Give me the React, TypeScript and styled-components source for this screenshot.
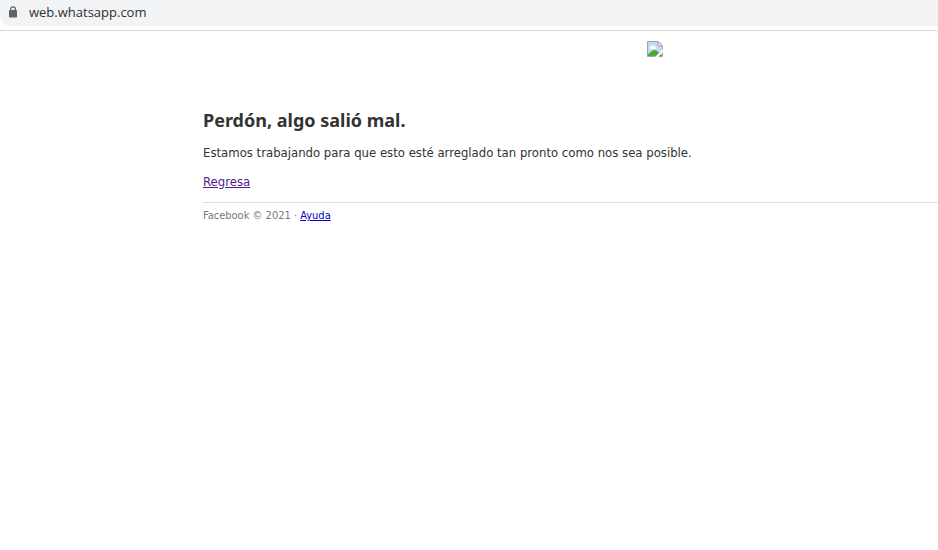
import React from "react";
import styled, { createGlobalStyle } from "styled-components";

const GlobalStyle = createGlobalStyle`
  *, *::before, *::after {
    box-sizing: border-box;
  }
  body {
    margin: 0;
    background: #fff;
    color: #333;
    font-family: Tahoma, "DejaVu Sans Condensed", sans-serif;
    font-size: 13px;
    line-height: 18px;
  }
`;

const AddressBar = styled.header`
  height: 31px;
  padding-bottom: 4px;
  border-bottom: 1px solid #dadada;
`;

const AddressField = styled.label`
  display: flex;
  align-items: center;
  gap: 11px;
  height: 26px;
  padding: 0 0 2px 8px;
  border-bottom-left-radius: 10px;
  background: #f1f3f4;
`;

const AddressInput = styled.input`
  flex: 1;
  min-width: 0;
  height: 20px;
  padding: 0;
  border: 0;
  outline: 0;
  background: transparent;
  color: #303134;
  font-family: "Open Sans", sans-serif;
  font-size: 13px;
  line-height: 20px;
`;

const Page = styled.main`
  margin-left: 203px;
`;

const Banner = styled.div`
  display: flex;
  justify-content: center;
  padding: 10px 0 0 169px;
  margin-bottom: 51px;
`;

const Title = styled.h1`
  margin: 0 0 12px;
  font-family: "Noto Sans", sans-serif;
  font-size: 18px;
  font-weight: 700;
  line-height: 24px;
`;

const Message = styled.p`
  margin: 0 0 11px;
`;

const BackLink = styled.a`
  color: #551a8b;
`;

const Footer = styled.footer`
  margin-top: 11px;
  padding-top: 4px;
  border-top: 1px solid #ddd;
  color: #777;
  font-size: 11px;
`;

const HelpLink = styled.a`
  color: #0000cc;
`;

function LockIcon() {
  return (
    <svg width="10" height="12" viewBox="0 0 10 12" aria-hidden="true">
      <path d="M2.6 5V3.2a2.4 2.4 0 0 1 4.8 0V5" fill="none" stroke="#5f6368" strokeWidth="1.2" />
      <rect x="1" y="4" width="8" height="7.5" rx="0.8" fill="#5f6368" />
    </svg>
  );
}

function BrokenImage() {
  return (
    <svg width="16" height="16" viewBox="0 0 16 16" role="img" aria-label="Logo">
      <path d="M.5 .5H11L15.5 5V15.5H.5Z" fill="#c3d9f7" stroke="#a3a3a3" />
      <path d="M3 7a1.5 1.5 0 0 1 1.5-2 2 2 0 0 1 3.5 1 1 1 0 0 1 0 2H4a1 1 0 0 1-1-1Z" fill="#fff" />
      <path d="M1 15v-1.5Q5 9 7.5 9T15 14.5V15Z" fill="#4da63a" />
      <path d="M11 .5V5h4.5Z" fill="#eee" stroke="#a3a3a3" />
      <path d="M8 16 16 8V11L11 16Z" fill="#fff" />
    </svg>
  );
}

export default function App() {
  return (
    <>
      <GlobalStyle />
      <AddressBar>
        <AddressField>
          <LockIcon />
          <AddressInput type="text" aria-label="Dirección" defaultValue="web.whatsapp.com" />
        </AddressField>
      </AddressBar>
      <Page>
        <Banner>
          <BrokenImage />
        </Banner>
        <Title>Perdón, algo salió mal.</Title>
        <Message>Estamos trabajando para que esto esté arreglado tan pronto como nos sea posible.</Message>
        <BackLink href="#regresa">Regresa</BackLink>
        <Footer>
          Facebook © 2021 · <HelpLink href="#ayuda">Ayuda</HelpLink>
        </Footer>
      </Page>
    </>
  );
}
